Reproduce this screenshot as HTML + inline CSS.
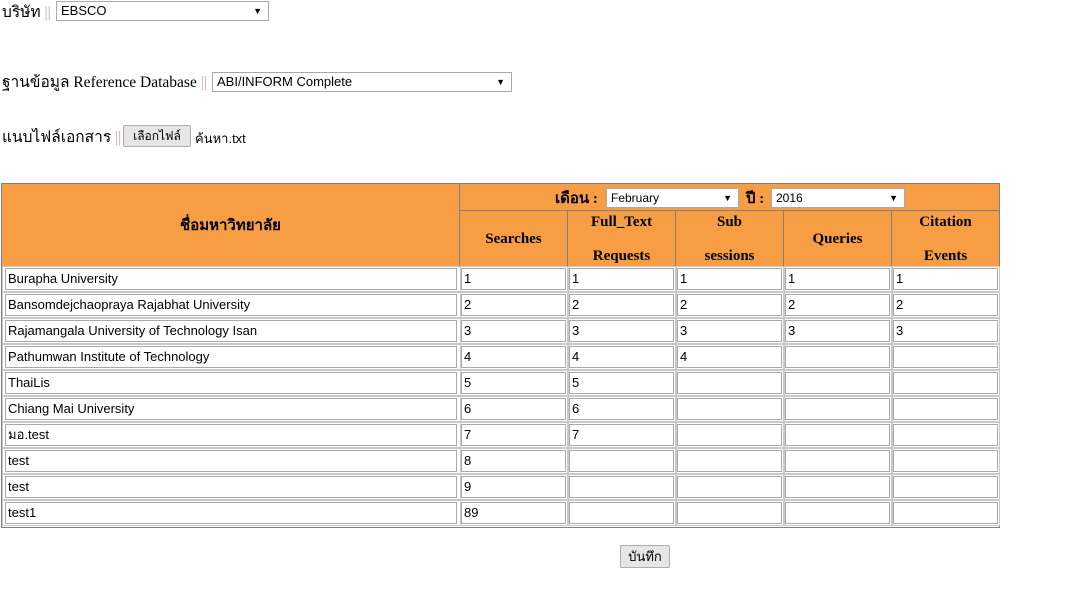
<!DOCTYPE html>
<html><head><meta charset="utf-8"><style>
body{margin:0;width:1071px;height:607px;background:#fff;position:relative;font-family:"Liberation Serif",serif;font-size:16px;color:#000;overflow:hidden}
.a{position:absolute;white-space:nowrap}
.sep{color:#c9a0a0}
.sel{position:absolute;height:18px;border:1px solid #a9a9a9;background:#fff;font-family:"Liberation Sans",sans-serif;font-size:13px;line-height:18px;padding-left:4px;box-sizing:content-box}
.sel:after{content:"▼";position:absolute;right:6px;top:0;font-size:9px}
.btn{position:absolute;border:1px solid #adadad;background:#e6e6e6;font-family:"Liberation Sans",sans-serif;font-size:12px;text-align:center;border-radius:2px}
.th{position:absolute;background:#f79e44;border:1px solid #808080;box-sizing:border-box;font-weight:bold;text-align:center;font-size:15px}
.cell{position:absolute;border:1px solid #c8c8c8;box-sizing:border-box;background:#fff}
.in{position:absolute;border:1px solid #a9a9a9;box-sizing:border-box;background:#fff;font-family:"Liberation Sans",sans-serif;font-size:13px;line-height:20px;padding-left:2px}
</style></head><body>
<div class="a" style="left:2px;top:-1px;font-size:15.5px">บริษัท <span class="sep">||</span></div>
<div class="sel" style="left:56px;top:1px;width:207px">EBSCO</div>
<div class="a" style="left:2px;top:69px;font-size:15.5px">ฐานข้อมูล Reference Database <span class="sep">||</span></div>
<div class="sel" style="left:212px;top:72px;width:294px">ABI/INFORM Complete</div>
<div class="a" style="left:2px;top:124px;font-size:15.5px">แนบไฟล์เอกสาร <span class="sep">||</span></div>
<div class="btn" style="left:123px;top:125px;width:66px;height:20px;line-height:20px">เลือกไฟล์</div>
<div class="a" style="left:195px;top:128px;font-family:'Liberation Sans',sans-serif;font-size:13px">ค้นหา.txt</div>

<div style="position:absolute;left:1px;top:183px;width:999px;height:345px;border:1px solid #808080;box-sizing:border-box"></div>
<div class="th" style="left:1px;top:183px;width:459px;height:84px;line-height:84px">ชื่อมหาวิทยาลัย</div>
<div class="th" style="left:459px;top:183px;width:541px;height:28px"></div>
<div class="a" style="left:555px;top:186px;font-weight:bold;font-size:15px">เดือน :</div>
<div class="a" style="left:746px;top:186px;font-weight:bold;font-size:15px">ปี :</div>
<div class="sel" style="left:606px;top:188px;width:127px;font-size:12px">February</div>
<div class="sel" style="left:771px;top:188px;width:128px;font-size:12px">2016</div>
<div class="th" style="left:459px;top:210px;width:109px;height:57px;line-height:57px">Searches</div>
<div class="th" style="left:567px;top:210px;width:109px;height:57px;line-height:34px"><div style="margin-top:-6px">Full_Text<br>Requests</div></div>
<div class="th" style="left:675px;top:210px;width:109px;height:57px;line-height:34px"><div style="margin-top:-6px">Sub<br>sessions</div></div>
<div class="th" style="left:783px;top:210px;width:109px;height:57px;line-height:57px">Queries</div>
<div class="th" style="left:891px;top:210px;width:109px;height:57px;line-height:34px"><div style="margin-top:-6px">Citation<br>Events</div></div>

<div id="rows"></div>
<script>
var names=["Burapha University","Bansomdejchaopraya Rajabhat University","Rajamangala University of Technology Isan","Pathumwan Institute of Technology","ThaiLis","Chiang Mai University","มอ.test","test","test","test1"];
var vals=[["1","1","1","1","1"],["2","2","2","2","2"],["3","3","3","3","3"],["4","4","4","",""],["5","5","","",""],["6","6","","",""],["7","7","","",""],["8","","","",""],["9","","","",""],["89","","","",""]];
var cols=[[1,459],[459,108],[567,108],[675,108],[783,108],[891,108]];
var h="";
for(var i=0;i<10;i++){var t=266+26*i;
for(var c=0;c<6;c++){var x=cols[c][0],w=cols[c][1];var v=c==0?names[i]:vals[i][c-1];
var l=c==0?5:x+2, ww=c==0?452:w-3;
h+='<div class="cell" style="left:'+(x+1)+'px;top:'+t+'px;width:'+(w)+'px;height:26px"></div>';
h+='<div class="in" style="left:'+l+'px;top:'+(t+2)+'px;width:'+ww+'px;height:22px">'+v+'</div>';}}
document.getElementById("rows").innerHTML=h;
</script>
<div class="btn" style="left:620px;top:545px;width:48px;height:21px;line-height:21px;font-size:13px">บันทึก</div>
</body></html>
